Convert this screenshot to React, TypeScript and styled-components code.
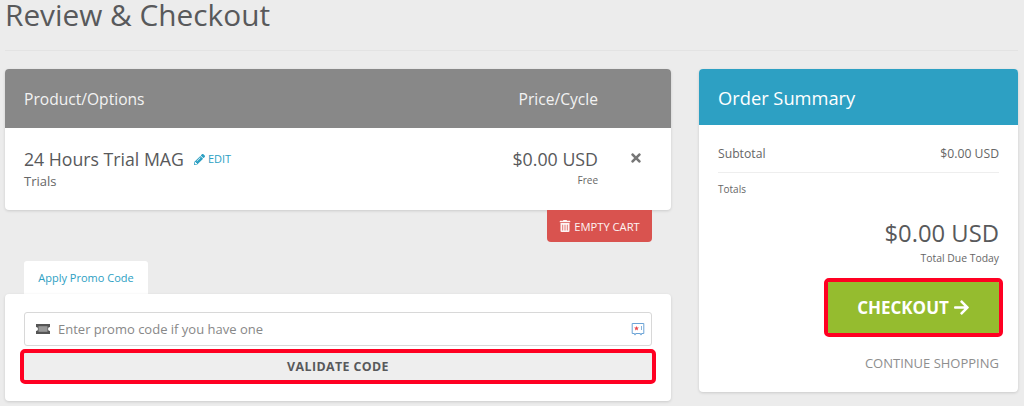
import React from "react";
import styled, { createGlobalStyle } from "styled-components";
import { FaPencilAlt, FaTrashAlt, FaTimes, FaArrowRight } from "react-icons/fa";

const Global = createGlobalStyle`
  html, body { margin: 0; padding: 0; background: #ececec; height: 406px; overflow: hidden; }
  * { box-sizing: border-box; }
  body { font-family: "Open Sans", "Liberation Sans", sans-serif; color: #58595b; }
`;

const Page = styled.div`
  padding: 0 6px 0 5px;
  height: 406px;
  overflow: hidden;
`;
const TitleBar = styled.div`
  height: 51px;
  border-bottom: 1px solid #e3e3e3;
  margin-bottom: 18px;
`;
const Title = styled.h1`
  margin: 0;
  font-size: 29.8px;
  font-weight: 400;
  line-height: 30px;
  color: #58595b;
`;
const Columns = styled.div`
  display: grid;
  grid-template-columns: 666px 319px;
  column-gap: 28px;
  align-items: start;
`;
const LeftColumn = styled.div`
  display: flex;
  flex-direction: column;
`;
const Card = styled.div`
  background: #fff;
  border-radius: 4px;
  box-shadow: 0 1px 3px rgba(0, 0, 0, 0.14);
  overflow: hidden;
`;
const CartHead = styled.div`
  height: 59px;
  background: #888888;
  color: #f2f2f2;
  display: flex;
  align-items: center;
  justify-content: space-between;
  padding: 0 73px 0 19px;
  font-size: 15.6px;
`;
const CartBody = styled.div`
  height: 82px;
  display: flex;
  justify-content: space-between;
  padding: 19px 0 0 19px;
`;
const ProductName = styled.div`
  display: flex;
  align-items: center;
  font-size: 17.7px;
  line-height: 24px;
  color: #58595b;
`;
const EditLink = styled.span`
  display: inline-flex;
  align-items: center;
  margin-left: 10px;
  gap: 3px;
  font-size: 11px;
  color: #2da0c3;
  svg { font-size: 11px; }
`;
const Muted = styled.div`
  font-size: 13px;
  line-height: 18px;
  margin-top: 1px;
  color: #666;
`;
const PriceSide = styled.div`
  display: flex;
`;
const PriceBlock = styled.div`
  text-align: right;
  width: 200px;
`;
const PriceText = styled.div`
  font-size: 17.8px;
  line-height: 24px;
  color: #58595b;
`;
const Cycle = styled.div`
  font-size: 10px;
  line-height: 16px;
  margin-top: 1px;
  color: #666;
`;
const RemoveCell = styled.div`
  width: 73px;
  padding: 4px 0 0 31px;
  color: #777;
  font-size: 14px;
  line-height: 14px;
`;
const EmptyRow = styled.div`
  display: flex;
  justify-content: flex-end;
  padding-right: 19px;
`;
const EmptyButton = styled.button`
  width: 105px;
  height: 32px;
  border: 0;
  border-radius: 0 0 4px 4px;
  background: #d9534f;
  color: #fdf3f3;
  font: 400 11.2px "Open Sans", sans-serif;
  display: flex;
  align-items: center;
  justify-content: center;
  gap: 3px;
  padding: 0;
  svg { font-size: 12px; }
`;
const TabRow = styled.div`
  display: flex;
  padding: 19px 0 0 19px;
`;
const Tab = styled.div`
  width: 124px;
  height: 33px;
  background: #fff;
  border-radius: 3px 3px 0 0;
  color: #2da0c3;
  font-size: 11px;
  display: flex;
  align-items: center;
  justify-content: center;
`;
const PromoCard = styled(Card)`
  height: 107px;
  padding: 18px 19px 0;
  overflow: visible;
`;
const PromoInput = styled.div`
  height: 34px;
  border: 1px solid #d8d8d8;
  border-radius: 3px;
  display: flex;
  align-items: center;
  padding: 0 6px 0 10px;
  gap: 7px;
  font-size: 13px;
  color: #888;
`;
const Placeholder = styled.span`
  flex: 1;
`;
const ValidateButton = styled.button`
  display: block;
  width: 100%;
  height: 27px;
  margin-top: 7px;
  border: 0;
  background: #eeeeee;
  outline: 4px solid #ff0022;
  border-radius: 1px;
  color: #58595b;
  font: 700 12.4px "Open Sans", sans-serif;
  letter-spacing: 0.4px;
`;
const SummaryHead = styled.div`
  height: 56px;
  background: #2da0c3;
  color: #fff;
  font-size: 18.3px;
  display: flex;
  align-items: center;
  padding: 0 19px;
`;
const SummaryBody = styled.div`
  height: 267px;
  padding: 18px 19px 0;
  display: flex;
  flex-direction: column;
`;
const SubRow = styled.div`
  display: flex;
  justify-content: space-between;
  align-items: center;
  height: 20px;
  font-size: 12.2px;
  color: #666;
`;
const Rule = styled.div`
  height: 1px;
  background: #eeeeee;
  margin-top: 9px;
`;
const TotalsLabel = styled.div`
  font-size: 10px;
  line-height: 14px;
  margin-top: 9px;
  color: #666;
`;
const TotalAmount = styled.div`
  text-align: right;
  font-size: 23.8px;
  line-height: 32px;
  margin-top: 21px;
  color: #58595b;
`;
const TotalDue = styled.div`
  text-align: right;
  font-size: 10.4px;
  line-height: 14px;
  margin-top: 2px;
  color: #666;
`;
const CheckoutRow = styled.div`
  display: flex;
  justify-content: flex-end;
  margin-top: 17px;
`;
const CheckoutButton = styled.button`
  width: 171px;
  height: 51px;
  border: 0;
  outline: 4px solid #ff0022;
  border-radius: 1px;
  background: #95bc2f;
  color: #fff;
  font: 700 17px "Open Sans", sans-serif;
  display: flex;
  align-items: center;
  justify-content: center;
  gap: 4px;
  padding: 0;
  svg { font-size: 17px; }
`;
const ContinueLink = styled.div`
  text-align: right;
  font-size: 13px;
  line-height: 18px;
  margin-top: 21px;
  color: #8e8e8e;
`;

const TicketIcon = () => (
  <svg width="16" height="12" viewBox="0 0 16 12" aria-hidden="true">
    <path fill="#555" d="M1 1h14v2.9a2 2 0 0 0 0 4V11H1V7.9a2 2 0 0 0 0-4z" />
    <rect x="3.5" y="3.2" width="9" height="5.6" fill="#999" />
  </svg>
);
const CouponIcon = () => (
  <svg width="14" height="14" viewBox="0 0 14 14" aria-hidden="true">
    <path fill="#fff" stroke="#6ba3d6" strokeWidth="1" d="M1.2 1.5h11.6v10h-2.3v1.2H9.4v-1.2H4.6v1.2H3.5v-1.2H1.2z" />
    <path fill="#ea4a4f" d="M5.5 3.9l.7 1.6 1.7.1-1.3 1.1.4 1.7-1.5-.9-1.5.9.4-1.7-1.3-1.1 1.7-.1z" />
    <rect x="10" y="4" width="1" height="4" fill="#8ab4dc" />
  </svg>
);

export default function App() {
  return (
    <Page>
      <Global />
      <TitleBar>
        <Title>Review &amp; Checkout</Title>
      </TitleBar>
      <Columns>
        <LeftColumn>
          <Card>
            <CartHead>
              <span>Product/Options</span>
              <span>Price/Cycle</span>
            </CartHead>
            <CartBody>
              <div>
                <ProductName>
                  24 Hours Trial MAG
                  <EditLink><FaPencilAlt />EDIT</EditLink>
                </ProductName>
                <Muted>Trials</Muted>
              </div>
              <PriceSide>
                <PriceBlock>
                  <PriceText>$0.00 USD</PriceText>
                  <Cycle>Free</Cycle>
                </PriceBlock>
                <RemoveCell><FaTimes /></RemoveCell>
              </PriceSide>
            </CartBody>
          </Card>
          <EmptyRow>
            <EmptyButton><FaTrashAlt />EMPTY CART</EmptyButton>
          </EmptyRow>
          <TabRow>
            <Tab>Apply Promo Code</Tab>
          </TabRow>
          <PromoCard>
            <PromoInput>
              <TicketIcon />
              <Placeholder>Enter promo code if you have one</Placeholder>
              <CouponIcon />
            </PromoInput>
            <ValidateButton>VALIDATE CODE</ValidateButton>
          </PromoCard>
        </LeftColumn>
        <Card>
          <SummaryHead>Order Summary</SummaryHead>
          <SummaryBody>
            <SubRow>
              <span>Subtotal</span>
              <span>$0.00 USD</span>
            </SubRow>
            <Rule />
            <TotalsLabel>Totals</TotalsLabel>
            <TotalAmount>$0.00 USD</TotalAmount>
            <TotalDue>Total Due Today</TotalDue>
            <CheckoutRow>
              <CheckoutButton>CHECKOUT<FaArrowRight /></CheckoutButton>
            </CheckoutRow>
            <ContinueLink>CONTINUE SHOPPING</ContinueLink>
          </SummaryBody>
        </Card>
      </Columns>
    </Page>
  );
}
